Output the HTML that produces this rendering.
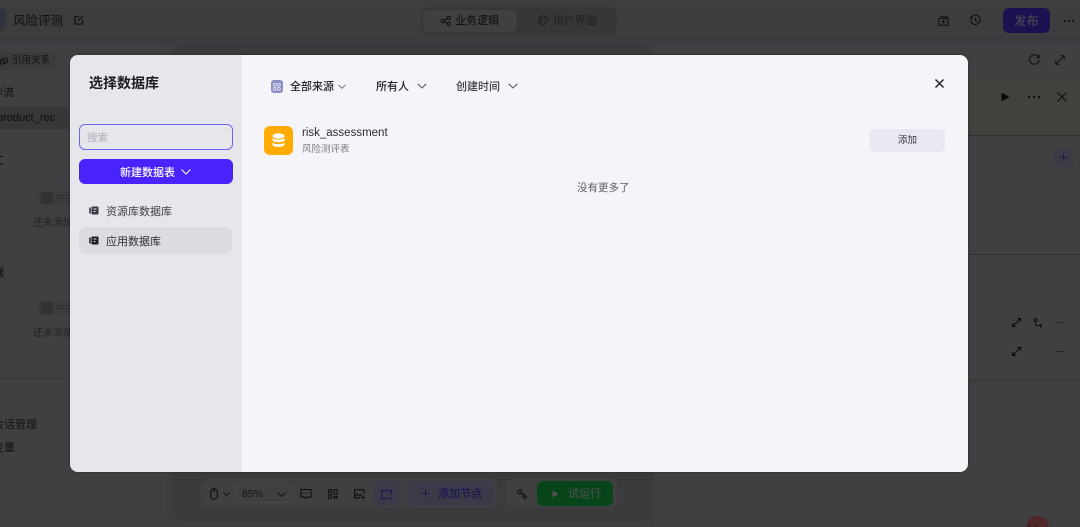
<!DOCTYPE html>
<html lang="zh"><head><meta charset="utf-8"><title>选择数据库</title>
<style>
*{box-sizing:border-box}
html,body{margin:0;padding:0;width:1080px;height:527px;overflow:hidden;background:#616165}
body{font-family:"Liberation Sans","Noto Sans CJK SC",sans-serif;color:#1c1d23}
#r{position:absolute;left:0;top:0;width:1080px;height:527px;overflow:hidden}
#p{position:absolute;left:0;top:0;width:1080px;height:527px;overflow:hidden;background:#c2c2ca}
#m{position:absolute;left:0;top:0;width:1080px;height:527px;background:rgba(0,0,0,.68)}
.a{position:absolute;white-space:nowrap}
svg{position:absolute;overflow:visible;fill:none}
.bg{color:#2a2a30}
.dim{color:#66666e}
</style></head><body><div id="r">

<!-- background page (light), dimmed by the mask below -->
<div id="p">
<div class="a" style="left:0;top:0;width:1080px;height:44px;background:linear-gradient(#c0c0c8,#bcbcc6)"></div>
<div class="a" style="left:-10px;top:44px;width:177px;height:477px;background:#c8c8cc;border-radius:8px"></div>
<div class="a" style="left:173px;top:44px;width:480px;height:477px;background:#b8b8c0;border-radius:8px"></div>
<div class="a" style="left:653px;top:44px;width:427px;height:483px;background:#c6c6cc"></div>
<div class="a" style="left:-6px;top:8px;width:12px;height:22px;background:#9aa2c0;border-radius:6px"></div>
<div class="a bg" style="left:13px;top:12px;font-size:12.5px;line-height:18px">风险评测</div>
<svg style="left:74px;top:15px" width="10" height="10" viewBox="0 0 11 11" stroke="#2a2a30" stroke-width="1.2"><path d="M9.5 5.5V10H1V1.5H5.5M4.5 6.5L9.5 1.2"/></svg>

<div class="a" style="left:421px;top:7px;width:196px;height:28px;background:#aaaab2;border-radius:7px"></div>
<div class="a" style="left:423px;top:10px;width:94px;height:22px;background:#c6c6cc;border-radius:6px"></div>
<svg style="left:441px;top:16px" width="10" height="10" viewBox="0 0 10 10" stroke="#2a2a30"><circle cx="2" cy="5" r="1.6"/><circle cx="7.8" cy="2" r="1.6"/><circle cx="7.8" cy="8" r="1.6"/><path d="M3.6 4.5L6.2 2.4M3.6 5.5L6.2 7.6"/></svg>
<div class="a bg" style="left:455px;top:13px;font-size:11px;line-height:17px">业务逻辑</div>
<svg style="left:538px;top:15px" width="11" height="11" viewBox="0 0 11 11" stroke="#5a5a62"><path d="M5.5 .7A4.8 4.8 0 1 0 5.5 10.3C7 10.3 6 8 7.2 7.5S10.3 7.5 10.3 5.5A4.8 4.8 0 0 0 5.5 .7Z"/><circle cx="3.3" cy="4" r=".6"/><circle cx="3.3" cy="7" r=".6"/><circle cx="6.5" cy="3.2" r=".6"/></svg>
<div class="a dim" style="left:553px;top:13px;font-size:11px;line-height:17px">用户界面</div>

<svg style="left:938px;top:16px" width="11" height="10" viewBox="0 0 11 10" stroke="#2a2a30"><path d="M1 2.5H10V9.3H1ZM2 .7H9L10 2.5M5.5 4V7.5M3.8 5.8H7.2"/></svg>
<svg style="left:970px;top:15px" width="11" height="11" viewBox="0 0 11 11" stroke="#2a2a30"><path d="M1 3.2A4.7 4.7 0 1 1 .8 5.5M.8 1.2V3.4H3M5.5 3V5.7L7.4 6.8"/></svg>
<div class="a" style="left:1003px;top:8px;width:47px;height:25px;background:#5438ff;border-radius:6px;color:#fcf4ff;font-size:12px;line-height:26px;text-align:center">发布</div>
<div class="a" style="left:1064px;top:20px;width:2px;height:2px;background:#46464e;box-shadow:4px 0 #46464e,8px 0 #46464e"></div>

<div class="a" style="left:-4px;top:52px;width:60px;height:18px;background:#b8b8be;border-radius:4px"></div>
<svg style="left:0;top:57px" width="8" height="8" viewBox="0 0 9 9" stroke="#2a2a30"><rect x="3" y="1" width="5.5" height="5.5" rx="1"/><rect x=".5" y="3" width="5" height="5" rx="1"/></svg>
<div class="a" style="left:12px;top:53px;font-size:9.5px;line-height:15px;color:#3a3a40">引用关系</div>
<div class="a bg" style="left:-19px;top:85px;font-size:11px;line-height:17px">工作流</div>
<div class="a" style="left:-6px;top:107px;width:75px;height:22px;background:#acacb2;border-radius:4px"></div>
<div class="a bg" style="left:-3px;top:110px;font-size:11px;line-height:16px">product_rec</div>
<div class="a bg" style="left:-7px;top:153px;font-size:11px;line-height:16px">工</div>
<div class="a" style="left:38px;top:191px;width:32px;height:14px;background:#bcbcc2;border-radius:3px 0 0 3px"></div>
<div class="a" style="left:41px;top:192px;width:12px;height:12px;background:#9c9ca2;border-radius:2px"></div>
<div class="a" style="left:56px;top:195px;width:14px;height:1px;background:#9c9ca2;box-shadow:0 3px #9c9ca2"></div>
<div class="a" style="left:33px;top:217px;width:37px;height:14px;overflow:hidden;font-size:10px;line-height:14px;color:#6a6a72">还未添加</div>
<div class="a bg" style="left:-7px;top:265px;font-size:11px;line-height:16px">据</div>
<div class="a" style="left:38px;top:301px;width:32px;height:14px;background:#bcbcc2;border-radius:3px 0 0 3px"></div>
<div class="a" style="left:41px;top:302px;width:12px;height:12px;background:#9c9ca2;border-radius:2px"></div>
<div class="a" style="left:56px;top:305px;width:14px;height:1px;background:#9c9ca2;box-shadow:0 3px #9c9ca2"></div>
<div class="a" style="left:33px;top:327px;width:37px;height:14px;overflow:hidden;font-size:10px;line-height:14px;color:#6a6a72">还未添加</div>
<div class="a" style="left:0;top:378px;width:70px;height:1px;background:#acacb2"></div>
<div class="a" style="left:-7px;top:417px;font-size:11px;line-height:16px;color:#3a3a40">会话管理</div>
<div class="a" style="left:-7px;top:440px;font-size:11px;line-height:16px;color:#3a3a40">变量</div>

<!-- right panel -->
<div class="a" style="left:968px;top:135px;width:112px;height:1px;background:#9a9aa2"></div>
<div class="a" style="left:968px;top:254px;width:112px;height:1px;background:#9a9aa2"></div>
<div class="a" style="left:968px;top:380px;width:112px;height:1px;background:#a4a4a8"></div>
<div class="a" style="left:968px;top:79px;width:112px;height:56px;background:#cacac2"></div>
<div class="a" style="left:1054px;top:149px;width:19px;height:18px;background:#b6b4dc;border-radius:4px"></div>
<svg style="left:1059px;top:153px" width="9" height="9" stroke="#5e54f0"><path d="M4.5 .5V8.5M.5 4.5H8.5"/></svg>
<svg style="left:1029px;top:54px" width="11" height="11" viewBox="0 0 11 11" stroke="#2a2a30"><path d="M9.8 3.5A4.8 4.8 0 1 0 10.2 6M10 1V3.7H7.5"/></svg>
<svg style="left:1055px;top:55px" width="10" height="10" viewBox="0 0 10 10" stroke="#2a2a30"><path d="M.7 9.3L9.3 .7M5.8 .7H9.3V4.2M.7 5.8V9.3H4.2"/></svg>
<svg style="left:1001px;top:92px" width="9" height="10" viewBox="0 0 9 10"><path d="M.5 .5L8.5 5L.5 9.5Z" fill="#1c1c22"/></svg>
<div class="a" style="left:1028px;top:96px;width:2px;height:2px;background:#2a2a30;box-shadow:5px 0 #2a2a30,10px 0 #2a2a30"></div>
<svg style="left:1057px;top:92px" width="10" height="10" stroke="#2a2a30" stroke-width="1.1"><path d="M.5 .5L9.5 9.5M9.5 .5L.5 9.5"/></svg>
<svg style="left:1012px;top:318px" width="9" height="9" viewBox="0 0 9 9" stroke="#1c1c22"><path d="M.5 8.5L8.5 .5M5.3 .5H8.5V3.7M.5 5.3V8.5H3.7"/></svg>
<svg style="left:1033px;top:318px" width="11" height="11" viewBox="0 0 11 11" stroke="#1c1c22"><circle cx="2.5" cy="2" r="1.6"/><path d="M2.5 3.6V6.5Q2.5 7.5 3.5 7.5H9M7.7 5.7V9.7"/></svg>
<div class="a" style="left:1056px;top:322px;width:8px;height:1px;background:#7c7c84"></div>
<svg style="left:1012px;top:347px" width="9" height="9" viewBox="0 0 9 9" stroke="#1c1c22"><path d="M.5 8.5L8.5 .5M5.3 .5H8.5V3.7M.5 5.3V8.5H3.7"/></svg>
<div class="a" style="left:1056px;top:351px;width:8px;height:1px;background:#7c7c84"></div>
<div class="a" style="left:1026px;top:516px;width:23px;height:23px;background:#fa7876;border-radius:50%"></div>
<div class="a" style="left:1029px;top:525px;width:1px;height:2px;background:#333;box-shadow:6px 0 #333"></div>

<!-- bottom toolbar -->
<div class="a" style="left:201px;top:479px;width:296px;height:29px;background:#c8c8ce;border-radius:8px"></div>
<div class="a" style="left:506px;top:479px;width:111px;height:29px;background:#c8c8ce;border-radius:8px"></div>
<svg style="left:210px;top:488px" width="8" height="12" viewBox="0 0 8 12" stroke="#1c1c22"><rect x=".7" y=".7" width="6.6" height="10.6" rx="3.3"/><path d="M4 .7V4"/></svg>
<svg style="left:223px;top:492px" width="7" height="5" stroke="#3a3a40"><path d="M.5 .5L3.5 3.5L6.5 .5"/></svg>
<div class="a" style="left:236px;top:484px;width:55px;height:19px;border:1px solid #dedee4;border-radius:6px"></div>
<div class="a" style="left:242px;top:487px;font-size:10.5px;line-height:15px;color:#3a3a40">85%</div>
<svg style="left:277px;top:492px" width="9" height="6" stroke="#3a3a40"><path d="M.5 .5L4.5 4.5L8.5 .5"/></svg>
<svg style="left:300px;top:488px" width="12" height="12" viewBox="0 0 12 12" stroke="#1c1c22"><path d="M1 1.5H11V9H7.5L6 10.5L4.5 9H1ZM3.5 5.3H4.3M5.6 5.3H6.4M7.7 5.3H8.5"/></svg>
<svg style="left:328px;top:489px" width="10" height="10" viewBox="0 0 10 10" stroke="#1c1c22"><rect x=".7" y=".7" width="3" height="3"/><rect x="6.2" y=".7" width="3" height="4.5"/><rect x=".7" y="5.8" width="3" height="3.5"/><rect x="6.2" y="7.4" width="3" height="1.9"/></svg>
<svg style="left:354px;top:489px" width="11" height="10" viewBox="0 0 11 10" stroke="#1c1c22"><path d="M10 4.5V.7H.7V9H6M.7 7.5L3.5 5L6 7L8 5.5M7.5 8.5H10.7M9 7V10"/></svg>
<div class="a" style="left:374px;top:481px;width:25px;height:25px;background:#b4b4e0;border-radius:5px"></div>
<svg style="left:381px;top:490px" width="11" height="9" viewBox="0 0 11 9" stroke="#5444ff" stroke-width="1.1"><path d="M6 8.4H.6V.6H10.4V4.5M7.8 7.5A1.3 1.3 0 1 0 10 7"/></svg>
<div class="a" style="left:408px;top:481px;width:86px;height:25px;background:#b4b4e0;border-radius:6px"></div>
<svg style="left:421px;top:489px" width="9" height="9" stroke="#5444ff"><path d="M4.5 .5V8.5M.5 4.5H8.5"/></svg>
<div class="a" style="left:438px;top:486px;font-size:11px;line-height:16px;font-weight:500;color:#5444ff">添加节点</div>
<svg style="left:517px;top:489px" width="10" height="10" viewBox="0 0 10 10" stroke="#1c1c22"><circle cx="2.8" cy="2.8" r="2"/><path d="M4.2 4.2L6 6L7 5.3L9.5 8L8 9.5L5.3 7"/></svg>
<div class="a" style="left:537px;top:481px;width:76px;height:25px;background:#1ed656;border-radius:6px"></div>
<svg style="left:552px;top:490px" width="7" height="8"><path d="M.5 .5L6.5 4L.5 7.5Z" fill="#f4ffff"/></svg>
<div class="a" style="left:568px;top:486px;font-size:11px;line-height:17px;color:#f4ffff">试运行</div>
</div>

<!-- mask -->
<div id="m"></div>

<!-- modal -->
<div class="a" style="left:70px;top:55px;width:898px;height:417px;border-radius:8px;background:#f4f4f9;overflow:hidden;box-shadow:0 0 2px rgba(0,0,0,.45)">
  <div class="a" style="left:0;top:0;width:172px;height:417px;background:#e6e7eb"></div>
</div>
<div class="a" style="left:89px;top:73px;font-size:14px;line-height:20px;font-weight:700;color:#1c1d23">选择数据库</div>
<div class="a" style="left:79px;top:124px;width:154px;height:26px;border:1px solid #6f62f2;border-radius:6px"></div>
<div class="a" style="left:87px;top:130px;font-size:10.5px;line-height:16px;color:#a9abb8">搜索</div>
<div class="a" style="left:79px;top:159px;width:154px;height:25px;background:#4a22fb;border-radius:6px"></div>
<div class="a" style="left:120px;top:165px;font-size:11px;line-height:16px;font-weight:500;color:#fff">新建数据表</div>
<svg style="left:181px;top:169px" width="10" height="6" stroke="#fff"><path d="M.5 .5L5 5L9.5 .5"/></svg>
<svg style="left:89px;top:206px" width="10" height="9" viewBox="0 0 10 9"><rect x="2.5" y=".5" width="7" height="8" rx="1" fill="#3a3b42"/><rect x="0" y="1.5" width="2" height="6" fill="#5e5f66"/><path d="M4.5 3H7.5M4.5 5.5H6.5" stroke="#e6e7eb"/></svg>
<div class="a" style="left:106px;top:204px;font-size:11px;line-height:16px;color:#3f4048">资源库数据库</div>
<div class="a" style="left:79px;top:227px;width:153px;height:27px;background:#dbdce1;border-radius:7px"></div>
<svg style="left:89px;top:236px" width="10" height="9" viewBox="0 0 10 9"><rect x="2.5" y=".5" width="7" height="8" rx="1" fill="#1c1d23"/><rect x="0" y="1.5" width="2" height="6" fill="#4c4d55"/><path d="M4.5 3H7.5M4.5 5.5H6.5" stroke="#dbdce1"/></svg>
<div class="a" style="left:106px;top:234px;font-size:11px;line-height:16px;color:#2c2d34">应用数据库</div>

<div class="a" style="left:271px;top:80px;width:12px;height:13px;background:#8d8fc4;border-radius:3px"></div>
<svg style="left:273px;top:83px" width="8" height="8" stroke="#f4f4f9" stroke-width=".8"><rect x=".5" y=".5" width="2.6" height="2.6" rx=".8"/><rect x="4.6" y=".5" width="2.6" height="2.6" rx=".8"/><rect x=".5" y="4.6" width="2.6" height="2.6" rx=".8"/><rect x="4.6" y="4.6" width="2.6" height="2.6" rx=".8"/></svg>
<div class="a" style="left:290px;top:79px;font-size:11px;line-height:17px;font-weight:500;color:#24252c">全部来源</div>
<svg style="left:338px;top:84px" width="8" height="6" stroke="#74757d"><path d="M.5 .8L4 4.3L7.5 .8"/></svg>
<div class="a" style="left:376px;top:79px;font-size:11px;line-height:17px;font-weight:500;color:#24252c">所有人</div>
<svg style="left:417px;top:83px" width="10" height="7" stroke="#5c5d65" stroke-width="1.1"><path d="M.7 .8L5 5L9.3 .8"/></svg>
<div class="a" style="left:456px;top:79px;font-size:11px;line-height:17px;font-weight:500;color:#3a3b43">创建时间</div>
<svg style="left:508px;top:83px" width="10" height="7" stroke="#5c5d65" stroke-width="1.1"><path d="M.7 .8L5 5L9.3 .8"/></svg>
<svg style="left:935px;top:79px" width="9" height="9" stroke="#23242b" stroke-width="1.5"><path d="M.5 .5L8.5 8.5M8.5 .5L.5 8.5"/></svg>

<div class="a" style="left:264px;top:126px;width:29px;height:29px;background:#ffab00;border-radius:6px"></div>
<svg style="left:272px;top:133px" width="13" height="15" viewBox="0 0 13 15"><ellipse cx="6.5" cy="3" rx="6" ry="2.7" fill="#fff"/><path d="M.5 5C1.5 7.2 11.5 7.2 12.5 5V7.5C11.5 9.7 1.5 9.7 .5 7.5ZM.5 9.5C1.5 11.7 11.5 11.7 12.5 9.5V12C11.5 14.5 1.5 14.5 .5 12Z" fill="#fff"/></svg>
<div class="a" style="left:302px;top:125px;font-size:11.5px;line-height:16px;color:#2b2c33">risk_assessment</div>
<div class="a" style="left:302px;top:143px;font-size:9.5px;line-height:14px;color:#7d7e87">风险测评表</div>
<div class="a" style="left:870px;top:129px;width:75px;height:23px;background:#e7e8f1;border-radius:5px;font-size:9.5px;line-height:24px;text-align:center;color:#35363e">添加</div>
<div class="a" style="left:577px;top:180px;font-size:10.5px;line-height:16px;color:#5d5e67">没有更多了</div>
</div></body></html>
